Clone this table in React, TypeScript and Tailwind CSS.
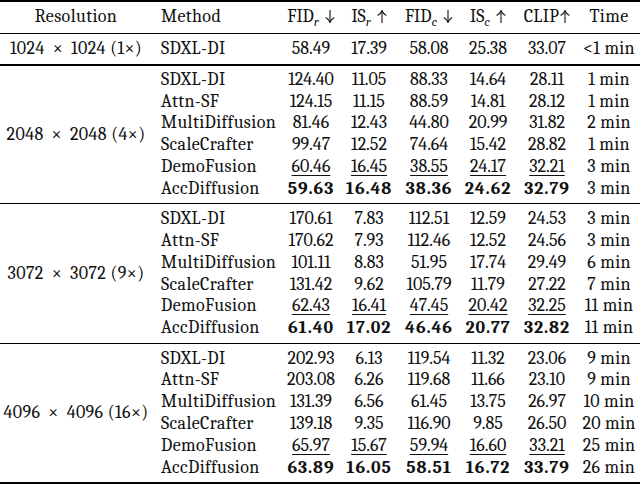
type Cell = string;
type Row = { method: string; vals: Cell[]; time: string; style?: "u" | "b" };

const groups: { label: string; rows: Row[] }[] = [
  {
    label: "2048 × 2048 (4×)",
    rows: [
      { method: "SDXL-DI", vals: ["124.40", "11.05", "88.33", "14.64", "28.11"], time: "1 min" },
      { method: "Attn-SF", vals: ["124.15", "11.15", "88.59", "14.81", "28.12"], time: "1 min" },
      { method: "MultiDiffusion", vals: ["81.46", "12.43", "44.80", "20.99", "31.82"], time: "2 min" },
      { method: "ScaleCrafter", vals: ["99.47", "12.52", "74.64", "15.42", "28.82"], time: "1 min" },
      { method: "DemoFusion", vals: ["60.46", "16.45", "38.55", "24.17", "32.21"], time: "3 min", style: "u" },
      { method: "AccDiffusion", vals: ["59.63", "16.48", "38.36", "24.62", "32.79"], time: "3 min", style: "b" },
    ],
  },
  {
    label: "3072 × 3072 (9×)",
    rows: [
      { method: "SDXL-DI", vals: ["170.61", "7.83", "112.51", "12.59", "24.53"], time: "3 min" },
      { method: "Attn-SF", vals: ["170.62", "7.93", "112.46", "12.52", "24.56"], time: "3 min" },
      { method: "MultiDiffusion", vals: ["101.11", "8.83", "51.95", "17.74", "29.49"], time: "6 min" },
      { method: "ScaleCrafter", vals: ["131.42", "9.62", "105.79", "11.79", "27.22"], time: "7 min" },
      { method: "DemoFusion", vals: ["62.43", "16.41", "47.45", "20.42", "32.25"], time: "11 min", style: "u" },
      { method: "AccDiffusion", vals: ["61.40", "17.02", "46.46", "20.77", "32.82"], time: "11 min", style: "b" },
    ],
  },
  {
    label: "4096 × 4096 (16×)",
    rows: [
      { method: "SDXL-DI", vals: ["202.93", "6.13", "119.54", "11.32", "23.06"], time: "9 min" },
      { method: "Attn-SF", vals: ["203.08", "6.26", "119.68", "11.66", "23.10"], time: "9 min" },
      { method: "MultiDiffusion", vals: ["131.39", "6.56", "61.45", "13.75", "26.97"], time: "10 min" },
      { method: "ScaleCrafter", vals: ["139.18", "9.35", "116.90", "9.85", "26.50"], time: "20 min" },
      { method: "DemoFusion", vals: ["65.97", "15.67", "59.94", "16.60", "33.21"], time: "25 min", style: "u" },
      { method: "AccDiffusion", vals: ["63.89", "16.05", "58.51", "16.72", "33.79"], time: "26 min", style: "b" },
    ],
  },
];

const Res = ({ text }: { text: string }) => {
  // "2048 × 2048 (4×)" -> wider math spacing around the first ×
  const [a, rest] = text.split(" × ");
  return (
    <span className="tracking-[0.4px] whitespace-nowrap">
      {a}
      <span className="mx-[8px]">×</span>
      {rest}
    </span>
  );
};

const Num = ({ v, style }: { v: string; style?: "u" | "b" }) => {
  if (style === "b") return <span className="font-bold tracking-[0.9px]">{v}</span>;
  if (style === "u")
    return <span className="underline decoration-1 underline-offset-[3px]">{v}</span>;
  return <span>{v}</span>;
};

const Sub = ({ c }: { c: string }) => <sub className="italic text-[13px]">{c}</sub>;

// computer-modern style arrow
const Arrow = ({ up, gap = true }: { up?: boolean; gap?: boolean }) => (
  <svg
    width="10"
    height="13"
    viewBox="0 0 10 13"
    className={`inline-block align-[-1px] ${gap ? "ml-[6px]" : "ml-[1px]"}`}
    fill="none"
    stroke="#111"
    strokeWidth="1.1"
    strokeLinecap="round"
  >
    {up ? (
      <>
        <path d="M5 1v12" />
        <path d="M1 5.2Q3.8 3.6 5 0.8Q6.2 3.6 9 5.2" />
      </>
    ) : (
      <>
        <path d="M5 0v12" />
        <path d="M1 7.8Q3.8 9.4 5 12.2Q6.2 9.4 9 7.8" />
      </>
    )}
  </svg>
);

export default function App() {
  return (
    <div className="w-[640px] h-[486px] bg-white text-[#111] font-serif text-[18px] leading-[21.8px]">
      <table className="w-[640px] table-fixed border-collapse font-serif">
        <colgroup>
          <col className="w-[152px]" />
          <col className="w-[130px]" />
          <col className="w-[58px]" />
          <col className="w-[58px]" />
          <col className="w-[62px]" />
          <col className="w-[56px]" />
          <col className="w-[62px]" />
          <col className="w-[62px]" />
        </colgroup>
        <thead className="border-t-2 border-black">
          <tr className="h-[32px] border-b border-black">
            <th className="font-normal text-center tracking-[0.4px]">Resolution</th>
            <th className="font-normal text-left pl-[9px] tracking-[0.4px]">Method</th>
            <th className="font-normal text-center whitespace-nowrap">
              FID<Sub c="r" />
              <Arrow />
            </th>
            <th className="font-normal text-center whitespace-nowrap">
              IS<Sub c="r" />
              <Arrow up />
            </th>
            <th className="font-normal text-center whitespace-nowrap">
              FID<Sub c="c" />
              <Arrow />
            </th>
            <th className="font-normal text-center whitespace-nowrap">
              IS<Sub c="c" />
              <Arrow up />
            </th>
            <th className="font-normal text-center whitespace-nowrap tracking-[0.4px]">
              CLIP
              <Arrow up gap={false} />
            </th>
            <th className="font-normal text-center tracking-[0.4px]">Time</th>
          </tr>
        </thead>
        <tbody>
          <tr className="h-[31.5px] border-b-2 border-black">
            <td className="text-center">
              <Res text="1024 × 1024 (1×)" />
            </td>
            <td className="pl-[9px] tracking-[0.4px]">SDXL-DI</td>
            <td className="text-center">58.49</td>
            <td className="text-center">17.39</td>
            <td className="text-center">58.08</td>
            <td className="text-center">25.38</td>
            <td className="text-center">33.07</td>
            <td className="text-center whitespace-nowrap tracking-[0.3px]">&lt;1 min</td>
          </tr>
        </tbody>
        {groups.map((g, gi) => (
          <tbody
            key={g.label}
            className={gi === groups.length - 1 ? "border-b-2 border-black" : "border-b border-black"}
          >
            {g.rows.map((r, i) => {
              const first = i === 0;
              const last = i === g.rows.length - 1;
              const h = first ? "h-[26.1px] align-bottom" : last ? "h-[26.1px] align-top" : "h-[21.8px]";
              return (
                <tr key={r.method} className={h}>
                  {first && (
                    <td rowSpan={6} className="text-center align-middle">
                      <Res text={g.label} />
                    </td>
                  )}
                  <td className="pl-[9px] tracking-[0.4px] whitespace-nowrap">{r.method}</td>
                  {r.vals.map((v, k) => (
                    <td key={k} className="text-center">
                      <Num v={v} style={r.style} />
                    </td>
                  ))}
                  <td className="text-center whitespace-nowrap tracking-[0.3px]">{r.time}</td>
                </tr>
              );
            })}
          </tbody>
        ))}
      </table>
    </div>
  );
}
